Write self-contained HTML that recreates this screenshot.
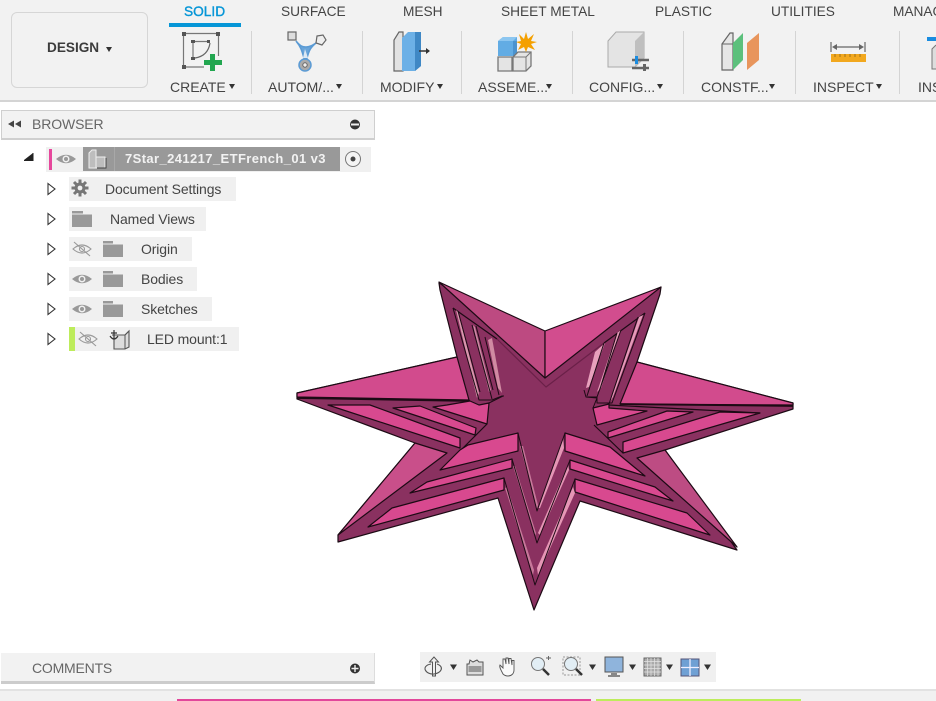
<!DOCTYPE html>
<html><head><meta charset="utf-8">
<style>
html,body{margin:0;padding:0;background:#fff}
#p{position:relative;width:936px;height:701px;overflow:hidden;background:#fff;font-family:"Liberation Sans",sans-serif;color:#444}
#p div,#p span{position:absolute;white-space:nowrap}
.t{font-size:13.7px;top:4px;line-height:16px}
.l{font-size:14px;top:79px;line-height:16px;color:#444}
.a{width:0;height:0;border-left:3.5px solid transparent;border-right:3.5px solid transparent;border-top:5px solid #333;top:84px}
.s{width:1px;top:31px;height:63px;background:#d4d4d4}
.r{background:#f0f0f0;height:24px;left:69px}
.x{font-size:14px;letter-spacing:-.12px;line-height:16px;color:#444}
svg{position:absolute;left:0;top:0}
</style></head><body><div id="p">

<div style="left:0;top:0;width:936px;height:100px;background:#f2f2f2;border-bottom:2px solid #d4d4d4"></div>
<div style="left:11px;top:12px;width:135px;height:74px;border:1px solid #d6d6d6;border-radius:6px"></div>
<div style="left:47px;top:40px;font-size:13.600px;font-weight:bold;line-height:16px;color:#3c3c3c">DESIGN</div>
<div style="left:106px;top:47px;width:0;height:0;border-left:3.5px solid transparent;border-right:3.5px solid transparent;border-top:5px solid #333"></div>

<div class="t" style="left:184px;color:#0696d7;-webkit-text-stroke:.4px #0696d7">SOLID</div>
<div style="left:169px;top:23px;width:72px;height:4px;background:#0696d7"></div>
<div class="t" style="left:281px">SURFACE</div>
<div class="t" style="left:403px">MESH</div>
<div class="t" style="left:501px">SHEET METAL</div>
<div class="t" style="left:655px">PLASTIC</div>
<div class="t" style="left:771px">UTILITIES</div>
<div class="t" style="left:893px">MANAGE</div>

<div class="s" style="left:251px"></div><div class="s" style="left:362px"></div><div class="s" style="left:461px"></div>
<div class="s" style="left:572px"></div><div class="s" style="left:683px"></div><div class="s" style="left:795px"></div><div class="s" style="left:899px"></div>

<div class="l" style="left:170px">CREATE</div><div class="a" style="left:229px"></div>
<div class="l" style="left:268px">AUTOM/...</div><div class="a" style="left:336px"></div>
<div class="l" style="left:380px">MODIFY</div><div class="a" style="left:437px"></div>
<div class="l" style="left:478px">ASSEME...</div><div class="a" style="left:546px"></div>
<div class="l" style="left:589px">CONFIG...</div><div class="a" style="left:657px"></div>
<div class="l" style="left:701px">CONSTF...</div><div class="a" style="left:769px"></div>
<div class="l" style="left:813px">INSPECT</div><div class="a" style="left:876px"></div>
<div class="l" style="left:918px">INS</div>

<svg width="936" height="100" viewBox="0 0 936 100">
<!-- create -->
<g fill="#555"><rect x="182" y="32" width="4" height="4"/><rect x="216" y="32" width="4" height="4"/><rect x="182" y="65" width="4" height="4"/><rect x="191" y="40" width="4" height="3"/><rect x="207" y="40" width="3" height="3"/><rect x="191" y="57" width="4" height="3"/></g>
<path d="M186 33.500H216M183.500 36V65M218.500 36V56M186 67H204M193 43V57M195 41.500H207" stroke="#777" stroke-width="1.200" fill="none"/>
<path d="M195 58Q208 56 210 43" stroke="#666" stroke-width="1.200" fill="none"/>
<path d="M210 54h5v6h7v5h-7v6h-5v-6h-6v-5h6z" fill="#22a650"/>
<!-- automate -->
<path d="M296 41C301 47 303 47 306 47C310 47 313 45 316 43C311 47 309 50 307 58H304C302 51 301 47 296 41Z" fill="#6aa5da" stroke="#5b9bd5" stroke-width="1.600"/>
<path d="M305 49L303 58H308Z" fill="#dbe8f4"/>
<circle cx="305" cy="65" r="6" fill="#aaa" stroke="#5b9bd5" stroke-width="1.500"/><circle cx="305" cy="65" r="2.200" fill="#eee" stroke="#666"/>
<rect x="288" y="32" width="8" height="8" fill="#ddd" stroke="#666" stroke-width="1.200"/>
<path d="M317 36L323 35L326 40L322 45L316 43Z" fill="#eee" stroke="#666" stroke-width="1.200"/>
<!-- modify -->
<path d="M394 71V40L399 32H403V71Z" fill="#e2e2e2" stroke="#666" stroke-width="1.200"/>
<path d="M402 38L408 32H421V66L415 71H402Z" fill="#6cb0e6"/><path d="M415 32H421V66L415 71Z" fill="#3f88c5"/>
<path d="M419 51H429" stroke="#333" stroke-width="1.500"/><path d="M426 48L430 51L426 54Z" fill="#333"/>
<!-- assemble -->
<path d="M498 56V41L503 37H517V56Z" fill="#62ace4"/><path d="M498 41L503 37H517L513 41Z" fill="#8cc6f0"/><path d="M513 41H517V56H513Z" fill="#4b93cf"/>
<path d="M498 57H512V71H498Z" fill="#e4e4e4" stroke="#777" stroke-width="1.300"/><path d="M513 57L518 52H531V66L526 71H513Z" fill="#e4e4e4" stroke="#777" stroke-width="1.300"/><path d="M513 57H526V71M526 57L531 52" fill="none" stroke="#777"/>
<path d="M526 32L528 39L534 34L531 41L537 42L531 44L535 50L528 47L526 52L524 47L518 50L521 44L516 42L521 41L519 34L524 39Z" fill="#f4a000"/>
<!-- configure -->
<path d="M608 41L616 32H644V58L635 67H608Z" fill="#e4e4e4" stroke="#aaa"/><path d="M635 41L644 32V58L635 67Z" fill="#bfbfbf"/>
<path d="M632 60H649M632 68H649" stroke="#666" stroke-width="2.500"/><rect x="635" y="56" width="3" height="8" fill="#1a8ce0"/><rect x="643" y="64" width="3" height="7" fill="#666"/>
<!-- construct -->
<path d="M722 44L730 33H733V70H722Z" fill="#e6e6e6" stroke="#666" stroke-width="1.200"/><path d="M722 44H733" stroke="#666"/>
<path d="M733 43L743 33V60L733 70Z" fill="#5cc07c"/>
<path d="M747 43L759 33V60L747 70Z" fill="#e8955c"/>
<!-- inspect -->
<path d="M831 42V52M865 42V52M834 47H862" stroke="#666" stroke-width="1.200"/><path d="M832 47L837 44V50ZM864 47L859 44V50Z" fill="#666"/>
<rect x="831" y="54" width="35" height="8" fill="#f2a81e"/><path d="M835 54v3M840 54v3M845 54v3M850 54v3M855 54v3M860 54v3" stroke="#a07018"/>
<!-- insert -->
<rect x="927" y="37" width="9" height="4" fill="#1a8ce0"/><path d="M936 45L932 49V69H936" fill="#ddd" stroke="#777"/>
</svg>

<div style="left:1px;top:110px;width:372px;height:27px;background:#f2f2f2;border:1px solid #cfcfcf;border-bottom-width:2px"></div>
<div style="left:32px;top:116px;font-size:14px;letter-spacing:-.12px;line-height:16px;color:#666">BROWSER</div>

<div style="left:46px;top:147px;width:325px;height:25px;background:#f0f0f0"></div>
<div style="left:49px;top:149px;width:3px;height:21px;background:#e6479c"></div>
<div style="left:83px;top:147px;width:257px;height:24px;background:#999"></div>
<div style="left:114px;top:147px;width:1px;height:24px;background:#a8a8a8"></div>
<div style="left:125px;top:151px;font-size:13px;font-weight:bold;line-height:16px;color:#f2f2f2;letter-spacing:.4px">7Star_241217_ETFrench_01 v3</div>

<div class="r" style="top:177px;width:167px"></div><div class="x" style="left:105px;top:181px">Document Settings</div>
<div class="r" style="top:207px;width:137px"></div><div class="x" style="left:110px;top:211px">Named Views</div>
<div class="r" style="top:237px;width:123px"></div><div class="x" style="left:141px;top:241px">Origin</div>
<div class="r" style="top:267px;width:128px"></div><div class="x" style="left:141px;top:271px">Bodies</div>
<div class="r" style="top:297px;width:143px"></div><div class="x" style="left:141px;top:301px">Sketches</div>
<div class="r" style="top:327px;width:170px"></div><div class="x" style="left:147px;top:331px">LED mount:1</div>
<div style="left:69px;top:327px;width:6px;height:24px;background:#bdec5b"></div>

<svg width="400" height="360" viewBox="0 0 400 360">
<path d="M14 120.500L8 124L14 127.500ZM21 120.500L15 124L21 127.500Z" fill="#444" stroke="none"/>
<circle cx="355" cy="124.500" r="5" fill="#333"/><rect x="351" y="123.500" width="8" height="2" fill="#eee"/>
<path d="M24 160L33 153V160Z" fill="#222"/><path d="M24 160.500H33V153" stroke="#222" fill="none"/>
<defs>
<path id="e" d="M-10 0Q0 -8.500 10 0Q0 8.500 -10 0Z" fill="#999"/>
</defs>
<g><use href="#e" x="66" y="159"/><circle cx="66" cy="159" r="3.500" fill="#f0f0f0"/><circle cx="66" cy="159" r="2" fill="#999"/></g>
<g><use href="#e" x="82" y="279"/><circle cx="82" cy="279" r="3.500" fill="#f0f0f0"/><circle cx="82" cy="279" r="2" fill="#999"/></g>
<g><use href="#e" x="82" y="309"/><circle cx="82" cy="309" r="3.500" fill="#f0f0f0"/><circle cx="82" cy="309" r="2" fill="#999"/></g>
<g fill="none" stroke="#999" stroke-width="1.100"><path d="M73 249Q82 241 91 249Q82 257 73 249Z"/><circle cx="82" cy="249" r="2.500"/><path d="M74 242L90 256"/>
<path d="M79 339Q88 331 97 339Q88 347 79 339Z"/><circle cx="88" cy="339" r="2.500"/><path d="M80 332L96 346"/></g>
<!-- radio -->
<circle cx="353" cy="159" r="7.500" fill="#f4f4f4" stroke="#777"/><circle cx="353" cy="159" r="2.500" fill="#444"/>
<!-- comp icon -->
<path d="M89 168V153L92 150H96V168ZM96 168V157H105V168Z" fill="#bdbdbd" stroke="#eee"/><path d="M97 168H106V158" fill="none" stroke="#444"/>
<!-- expanders -->
<g fill="#fff" stroke="#333" stroke-width="1.100"><path d="M48 183.500L55 189L48 194.500Z"/><path d="M48 213.500L55 219L48 224.500Z"/><path d="M48 243.500L55 249L48 254.500Z"/><path d="M48 273.500L55 279L48 284.500Z"/><path d="M48 303.500L55 309L48 314.500Z"/><path d="M48 333.500L55 339L48 344.500Z"/></g>
<!-- gear -->
<circle cx="80" cy="188" r="5.500" fill="#777"/>
<path d="M80 179.500V196.500M71.500 188H88.500M74 182L86 194M86 182L74 194" stroke="#777" stroke-width="3"/><circle cx="80" cy="188" r="2.400" fill="#f0f0f0"/>
<!-- folders -->
<g fill="#999"><path d="M72 211H83V213.500H72ZM72 214.500H92V227H72Z"/><path d="M103 241H113V243.500H103ZM103 244.500H123V257H103Z"/><path d="M103 271H113V273.500H103ZM103 274.500H123V287H103Z"/><path d="M103 301H113V303.500H103ZM103 304.500H123V317H103Z"/></g>
<!-- led icon -->
<path d="M112 335H125L129 331V347L125 349H114V338" fill="#ddd" stroke="#555" stroke-width="1.100"/><path d="M125 335V349M125 335L129 331" stroke="#555" fill="none"/>
<path d="M114 330V339M111 333H117M110 336Q114 342 118 336" stroke="#333" fill="none" stroke-width="1.200"/>
</svg>

<!-- STAR -->
<svg width="936" height="701" viewBox="0 0 936 701" style="stroke-linejoin:round">
<g stroke="#1c0a14" stroke-width="1.200">
<!-- base dark -->
<path fill="#8a3160" d="M439 283L545 345L661 287L660 294L637 362L793 403V409L665 450L737 550L580 501L534 610L498 498L338 542V535L415 443L297 399V393L457 357L440 290Z"/>

<!-- top panels -->
<path fill="#bd4a81" d="M439 282L545 331V378Z"/>
<path fill="#d24d8e" d="M661 287L545 331V378Z"/>
<path fill="none" d="M453 308L497 339M645 313L604 343"/>
<path fill="none" stroke="#6a2048" d="M497 339L546 387L604 343"/>

<!-- left & right panels -->
<path fill="#d24b8d" d="M297 393L457 357L469 400L297 397Z"/>
<path fill="#d24b8d" d="M637 362L793 403V405L620 404Z"/>
<path fill="none" stroke-width="1.800" d="M297 398L470 401M793 406L620 404"/>
<path fill="none" d="M609 405L760 413"/>

<!-- lower panels -->
<path fill="#c94f8a" d="M338 535L415 443L447 453Z"/>
<path fill="#bd4c83" d="M665 450L737 547L637 458Z"/>

<!-- left fins -->
<path fill="#d8498f" d="M328 405L370 405L460 438V448Z"/>
<path fill="#d8498f" d="M393 408L420 406L476 428L475 435Z"/>
<path fill="#d8498f" d="M433 407L447 405L470 401L479 405L489 403L487 424Z"/>
<path fill="none" d="M487 424L461 450"/>
<!-- right fins -->
<path fill="#d8498f" d="M593 408L609 404V408L647 411L597 425Z"/>
<path fill="#d8498f" d="M608 432L667 411L693 412L608 438Z"/>
<path fill="#d8498f" d="M623 442L720 412L760 413L623 453Z"/>
<path fill="none" d="M594 425L623 453"/>

<!-- bottom-left fins -->
<path fill="#d8498f" d="M460 450L468 445L518 433V451L440 470Z"/>
<path fill="#d8498f" d="M427 482L512 459V468L410 493Z"/>
<path fill="#d8498f" d="M392 508L504 478V490L368 527Z"/>
<!-- bottom-right fins -->
<path fill="#d8498f" d="M565 433L610 447L645 476L565 451Z"/>
<path fill="#d8498f" d="M570 460L655 487L673 501L570 469Z"/>
<path fill="#d8498f" d="M575 479L687 513L710 535L575 492Z"/>

<!-- slivers (no outlines) -->
<g stroke="none">
<path fill="#d898ad" d="M456 310L458 312L479 393L477 398Z"/>
<path fill="#c98aa2" d="M473 325L475 327L491 390L489 392Z"/>
<path fill="#d08aa2" d="M488 340L492 338L502 393L498 388Z"/>
<path fill="#e59ab8" d="M639 317L643 315L613 397L610 402Z"/>
<path fill="#e59ab8" d="M617 333L621 330L601 388L597 392Z"/>
<path fill="#e8a0bc" d="M595 352L605 343L589 387L586 388Z"/>
<path fill="#c7789a" d="M520 446L523 446L538 505L537 509Z"/>
<path fill="#e596b5" d="M563 438L564 448L540 508L538 508Z"/>
<path fill="#c7789a" d="M513 466L515 466L536 533L535 536Z"/>
<path fill="#e596b5" d="M568 465L569 470L540 535L538 533Z"/>
<path fill="#c7789a" d="M505 488L507 487L534 570L533 575Z"/>
<path fill="#e596b5" d="M573 487L575 493L538 575L537 568Z"/>
</g>
<!-- sliver lines -->
<g fill="none" stroke-width="1">
<path d="M453 308L479 400H492L502 396H504M458 311L480 392M472 325L492 399M476 326L493 390M485 337L499 395"/>
<path d="M645 313L612 403H597V397H586L584 390M638 317L609 404M621 330L597 397M617 333L600 389M604 343L587 396"/>
<path d="M489 403L503 396M586 397L597 398L593 408"/>
<path d="M518 433L537 511L565 433"/>
<path d="M512 459L537 543L570 460"/>
<path d="M504 478L535 585L575 479"/>
</g>
</g>
</svg>

<div style="left:1px;top:653px;width:373px;height:28px;background:#f2f2f2;border-bottom:3px solid #ccc;border-right:1px solid #ddd"></div>
<div style="left:32px;top:660px;font-size:14px;letter-spacing:-.2px;line-height:16px;color:#666">COMMENTS</div>
<div style="left:420px;top:652px;width:296px;height:30px;background:#f0f0f0"></div>

<svg width="936" height="701" viewBox="0 0 936 701">
<circle cx="355" cy="668.500" r="5" fill="#333"/><path d="M351.500 668.500H358.500M355 665V672" stroke="#eee" stroke-width="1.400"/>
<g fill="#333"><path d="M450 664.500H457L453.500 670Z"/><path d="M589 664.500H596L592.500 670Z"/><path d="M629 664.500H636L632.500 670Z"/><path d="M666 664.500H673L669.500 670Z"/><path d="M704 664.500H711L707.500 670Z"/></g>
<!-- orbit -->
<path d="M434 657L429.500 662H432.500V676H435.500V662H438.500Z" fill="#eee" stroke="#555"/>
<path d="M431 664C420 666 426 675 434 674C441 673 445 667 437 664" fill="none" stroke="#555" stroke-width="1.100"/>
<!-- look at -->
<path d="M467 664V675H483V662H479L477 660L473 662L470 660L469 664Z" fill="#ddd" stroke="#555"/><rect x="468.500" y="666" width="13" height="6" fill="#999"/>
<!-- pan -->
<path d="M503 674C501 670 499 667 500 665L503 668V659L505 659L506 664V658H508L509 664V658.500H511L512 665V660.500H514V670C514 674 511 676 508 676C506 676 504 675 503 674Z" fill="#fafafa" stroke="#555" stroke-width=".9"/>
<!-- zoom -->
<circle cx="538" cy="664" r="6.500" fill="#e2eef5" stroke="#777"/><path d="M543 669L549 675" stroke="#333" stroke-width="2.500"/><path d="M546 658H551M548.500 656V660" stroke="#666"/>
<!-- fit -->
<rect x="563" y="657" width="17" height="18" fill="none" stroke="#999" stroke-dasharray="2 1.500"/><circle cx="571" cy="664" r="6.500" fill="#e2eef5" stroke="#777"/><path d="M576 669L582 675" stroke="#333" stroke-width="2.500"/>
<!-- display -->
<rect x="605" y="657" width="18" height="15" fill="#8fb4dc" stroke="#555"/><path d="M611 673H617V675H620V677H608V675H611Z" fill="#888"/>
<!-- grid -->
<rect x="644" y="658" width="17" height="18" fill="#aaa" stroke="#666"/><path d="M647.500 658V676M651 658V676M654.500 658V676M658 658V676M644 661.500H661M644 665H661M644 668.500H661M644 672H661" stroke="#e4e4e4" stroke-width=".7"/>
<!-- viewports -->
<rect x="681" y="659" width="18" height="17" fill="#6fa0d4" stroke="#557"/><path d="M690 659V676M681 667.500H699" stroke="#eef" stroke-width="1.300"/>
</svg>

<div style="left:0;top:689px;width:936px;height:12px;background:#f1f1f1;border-top:2px solid #e2e2e2;box-sizing:border-box"></div>
<div style="left:177px;top:699px;width:414px;height:2px;background:#e2479b"></div>
<div style="left:596px;top:699px;width:205px;height:2px;background:#bdec5b"></div>
</div></body></html>
